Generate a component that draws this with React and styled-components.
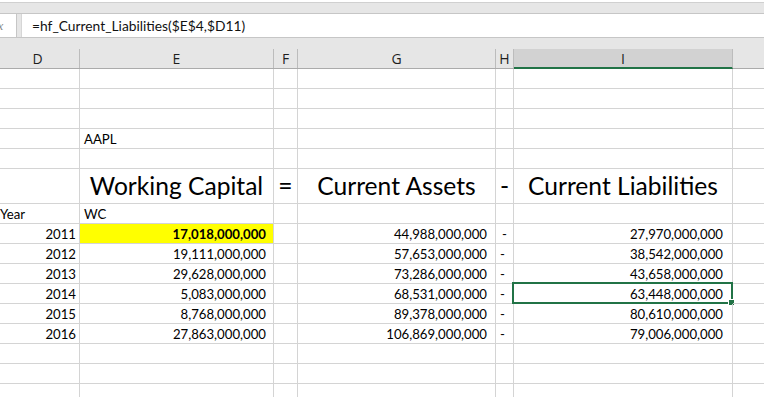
import styled, { createGlobalStyle } from "styled-components"

const GlobalStyle = createGlobalStyle`
    html, body {
        margin: 0;
        padding: 0;
        background: #ffffff;
        overflow: hidden;
    }
    body {
        font-family: Lato, 'Liberation Sans', sans-serif;
        color: #000;
    }
`

const COLS = "84px 194px 24px 198px 18px 219px 60px"

const data = [
    ["2011", "17,018,000,000", "44,988,000,000", "27,970,000,000"],
    ["2012", "19,111,000,000", "57,653,000,000", "38,542,000,000"],
    ["2013", "29,628,000,000", "73,286,000,000", "43,658,000,000"],
    ["2014", "5,083,000,000", "68,531,000,000", "63,448,000,000"],
    ["2015", "8,768,000,000", "89,378,000,000", "80,610,000,000"],
    ["2016", "27,863,000,000", "106,869,000,000", "79,006,000,000"],
]

export default function App() {
    return (
        <Sheet>
            <GlobalStyle />
            <TopStrip />
            <FormulaBar>
                <FxBox><span>fx</span></FxBox>
                <FormulaInput>=hf_Current_Liabilities($E$4,$D11)</FormulaInput>
            </FormulaBar>
            <Gap />
            <HeaderRow>
                {["D", "E", "F", "G", "H", "I", "J"].map(letter => (
                    <ColHead key={letter} $active={letter === "I"} $edge={letter === "J"}>{letter}</ColHead>
                ))}
            </HeaderRow>

            <Grid>
                <EmptyRow />
                <EmptyRow />
                <EmptyRow />
                <Row>
                    <Cell />
                    <Cell $pad="0 0 0 4px">AAPL</Cell>
                    <Cell /><Cell /><Cell /><Cell /><Cell />
                </Row>
                <EmptyRow />
                <Row $tall>
                    <Cell />
                    <Cell $big $align="center">Working Capital</Cell>
                    <Cell $big $align="center">=</Cell>
                    <Cell $big $align="center">Current Assets</Cell>
                    <Cell $big $align="center">-</Cell>
                    <Cell $big $align="center">Current Liabilities</Cell>
                    <Cell />
                </Row>
                <Row>
                    <Cell $pad="0 0 0 4px">Year</Cell>
                    <Cell $pad="0 0 0 4px">WC</Cell>
                    <Cell /><Cell /><Cell /><Cell /><Cell />
                </Row>
                {data.map((r, i) => (
                    <Row key={r[0]}>
                        <Cell $align="flex-end" $pad="0 3px 0 0">{r[0]}</Cell>
                        <Cell $align="flex-end" $pad="0 7px 0 0" $bold={i === 0} $fill={i === 0 ? "#ffff00" : null}>{r[1]}</Cell>
                        <Cell />
                        <Cell $align="flex-end" $pad="0 8px 0 0">{r[2]}</Cell>
                        <Cell $align={i === 0 ? "center" : "flex-start"} $pad={i === 0 ? "0" : "0 0 0 4px"}>-</Cell>
                        <Cell $align="flex-end" $pad="0 9px 0 0">
                            {r[3]}
                            {i === 3 && <Selection><Handle /></Selection>}
                        </Cell>
                        <Cell />
                    </Row>
                ))}
                <EmptyRow />
                <EmptyRow />
                <EmptyRow />
            </Grid>
        </Sheet>
    )
}

function EmptyRow() {
    return (
        <Row>
            <Cell /><Cell /><Cell /><Cell /><Cell /><Cell /><Cell />
        </Row>
    )
}

//Styled Components//
const Sheet = styled.div`
    width: 764px;
    height: 397px;
    overflow: hidden;
    background: #ffffff;
`

const TopStrip = styled.div`
    height: 10px;
    background: #e6e6e6;
    border-top: 1px solid #d0d0d0;
    margin-top: 2px;
`

const FormulaBar = styled.div`
    display: flex;
    height: 23px;
    background: #e6e6e6;
    border-top: 1px solid #c6c6c6;
    border-bottom: 1px solid #c6c6c6;
`

const FxBox = styled.div`
    width: 16px;
    background: #ffffff;
    border-right: 1px solid #c6c6c6;
    display: flex;
    align-items: center;
    overflow: hidden;

    span {
        margin-left: -6px;
        font-family: 'Liberation Serif', serif;
        font-style: italic;
        font-size: 13px;
        color: #8a8a8a;
    }
`

const FormulaInput = styled.div`
    flex: 1;
    margin-left: 4px;
    background: #ffffff;
    border-left: 1px solid #d6d6d6;
    display: flex;
    align-items: center;
    padding-left: 10px;
    font-size: 13.8px;
    color: #111;
`

const Gap = styled.div`
    height: 10px;
    background: #e6e6e6;
`

const HeaderRow = styled.div`
    display: grid;
    grid-template-columns: ${COLS};
    margin-left: -4px;
    height: 20px;
    background: #e6e6e6;
    border-bottom: 1px solid #ababab;
`

const ColHead = styled.div`
    display: flex;
    align-items: center;
    justify-content: ${p => p.$edge ? "flex-end" : "center"};
    margin-top: 1px;
    font-family: 'Open Sans', sans-serif;
    font-size: 14px;
    color: #1e1e1e;
    background: ${p => p.$active ? "#d2d2d2" : "transparent"};
    border-right: 1px solid #bcbcbc;
    border-bottom: ${p => p.$active ? "2px solid #217346" : "none"};
    margin-bottom: ${p => p.$active ? "-1px" : "0"};
    text-indent: ${p => p.$edge ? "36px" : "0"};
    overflow: hidden;
`

const Grid = styled.div`
    margin-left: -4px;
`

const Row = styled.div`
    display: grid;
    grid-template-columns: ${COLS};
    height: ${p => p.$tall ? "35px" : "20px"};
`

const Cell = styled.div`
    position: relative;
    display: flex;
    align-items: flex-end;
    justify-content: ${p => p.$align || "flex-start"};
    padding: ${p => p.$pad || "0"};
    padding-bottom: ${p => p.$big ? "4px" : "2px"};
    box-sizing: border-box;
    border-right: 1px solid #d4d4d4;
    border-bottom: 1px solid #d4d4d4;
    background: ${p => p.$fill || "transparent"};
    font-size: ${p => p.$big ? "24.6px" : "13.2px"};
    font-weight: ${p => p.$bold ? 700 : 400};
    line-height: 1;
    white-space: nowrap;
`

const Selection = styled.div`
    position: absolute;
    left: -2px;
    top: -2px;
    right: -1px;
    bottom: -1px;
    border: 2px solid #217346;
    pointer-events: none;
`

const Handle = styled.span`
    position: absolute;
    right: -4px;
    bottom: -4px;
    width: 5px;
    height: 5px;
    background: #217346;
    border: 1px solid #ffffff;
`
